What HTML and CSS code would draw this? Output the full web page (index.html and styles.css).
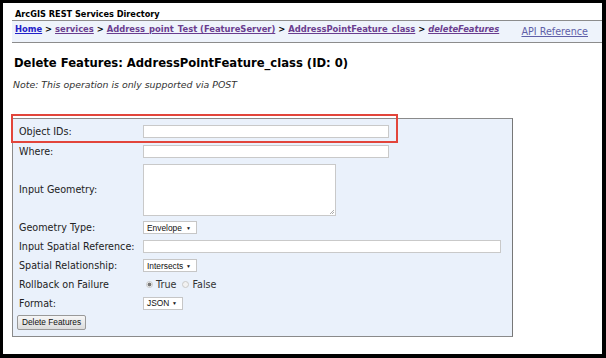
FILE: index.html
```html
<!DOCTYPE html>
<html>
<head>
<meta charset="utf-8">
<link rel="stylesheet" href="styles.css">
</head>
<body>
<div class="frame">
  <div class="userTable">ArcGIS REST Services Directory</div>
  <div class="navbar">
    <div class="crumbs">
      <a class="home" href="#">Home</a> &gt; <a href="#">services</a> &gt; <a href="#">Address_point_Test (FeatureServer)</a> &gt; <a href="#">AddressPointFeature_class</a> &gt; <a href="#"><i>deleteFeatures</i></a>
    </div>
    <a class="apiref" href="#">API Reference</a>
  </div>
  <h2 class="title">Delete Features: AddressPointFeature_class (ID: 0)</h2>
  <div class="note">Note: This operation is only supported via POST</div>
  <div class="formwrap">
    <div class="highlight"></div>
    <div class="formbox">
      <div class="row h20"><div class="lbl">Object IDs:</div><div class="fld"><span class="input w245"></span></div></div>
      <div class="row h20"><div class="lbl">Where:</div><div class="fld"><span class="input w245"></span></div></div>
      <div class="row tall"><div class="lbl">Input Geometry:</div><div class="fld"><span class="textarea"><svg class="grip" width="6" height="6" viewBox="0 0 6 6"><path d="M5 1L1 5M5 3L3 5" stroke="#999" stroke-width="0.8"/></svg></span></div></div>
      <div class="row h19"><div class="lbl">Geometry Type:</div><div class="fld"><span class="select w54">Envelope<b class="arr">&#9660;</b></span></div></div>
      <div class="row h19"><div class="lbl">Input Spatial Reference:</div><div class="fld"><span class="input w358"></span></div></div>
      <div class="row h19"><div class="lbl">Spatial Relationship:</div><div class="fld"><span class="select w54">Intersects<b class="arr">&#9660;</b></span></div></div>
      <div class="row h19"><div class="lbl">Rollback on Failure</div><div class="fld radios"><span class="radio on"></span><span class="rtxt">True</span><span class="radio"></span><span class="rtxt">False</span></div></div>
      <div class="row h18"><div class="lbl">Format:</div><div class="fld"><span class="select w40">JSON<b class="arr">&#9660;</b></span></div></div>
      <div class="row h20"><span class="button">Delete Features</span></div>
    </div>
  </div>
</div>
</body>
</html>
```
FILE: styles.css
```css
html, body { margin: 0; padding: 0; }
body { background: #000; width: 606px; height: 358px; overflow: hidden; }
.frame {
  margin: 3px 4px 0 3px;
  height: 351px;
  background: #fff;
  padding: 0 0 0 9px;
  box-sizing: border-box;
  font-family: "DejaVu Sans", Verdana, sans-serif;
  color: #000;
}
.userTable {
  font-size: 8.2px;
  font-weight: bold;
  padding: 4px 0 0 3px;
  line-height: 14px;
  box-sizing: border-box;
  height: 17px;
}
.navbar {
  display: flex;
  justify-content: space-between;
  background: #eef3fb;
  border-top: 1px solid #8c8c8c;
  border-bottom: 1px solid #8c8c8c;
  height: 23px;
  box-sizing: border-box;
  padding: 0 14px 0 3px;
}
.crumbs { font-weight: bold; font-size: 8.4px; line-height: 14px; padding-top: 1px; color: #000; }
.crumbs a { color: #6a3d8f; }
.crumbs a.home { color: #2320c8; }
.apiref { color: #5f5fa8; font-size: 9.6px; line-height: 15px; padding-top: 3px; }
.title {
  font-size: 11.6px;
  font-weight: bold;
  margin: 0;
  padding: 13px 0 0 2px;
  line-height: 15px;
}
.note {
  font-size: 9.4px;
  font-style: italic;
  color: #333;
  padding: 8px 0 0 1px;
  line-height: 12px;
}
.formwrap { position: relative; margin-top: 27px; width: 501px; }
.highlight {
  position: absolute;
  left: -1px; top: -4px;
  width: 387px; height: 29px;
  border: 2px solid #e2453b;
  box-sizing: border-box;
  pointer-events: none;
}
.formbox {
  background: #eaf1fb;
  border: 1px solid #8a8a8a;
  border-right-color: #777;
  height: 219px;
  box-sizing: border-box;
  padding: 2px 0 0 6px;
  font-size: 9.6px;
}
.row { display: flex; align-items: center; }
.h20 { height: 20px; }
.h19 { height: 19px; }
.h18 { height: 18px; }
.row.tall { height: 57px; }
.lbl { width: 124px; color: #222; }
.fld { display: flex; align-items: center; }
.input {
  display: block;
  height: 13px;
  background: #fff;
  border: 1px solid #c9c9c9;
  box-sizing: border-box;
}
.w245 { width: 246px; }
.w358 { width: 358px; }
.textarea {
  display: block;
  position: relative;
  width: 193px; height: 52px;
  background: #fff;
  border: 1px solid #c9c9c9;
  box-sizing: border-box;
}
.grip { position: absolute; right: 0; bottom: 0; }
.select {
  display: inline-flex;
  align-items: center;
  height: 13px;
  box-sizing: border-box;
  background: #fff;
  border: 1px solid #c6c6c6;
  font-family: "Liberation Sans", Arial, sans-serif;
  font-size: 8.4px;
  padding: 0 0 0 3px;
  color: #111;
}
.w54 { width: 54px; }
.w40 { width: 40px; }
.arr { font-size: 5px; margin-left: auto; margin-right: 5px; font-weight: normal; }
.radios { padding-left: 3px; font-size: 9.6px; }
.radio {
  width: 7px; height: 7px;
  border-radius: 50%;
  border: 1px solid #c9c9c9;
  background: #f2f2f2;
  box-sizing: border-box;
  margin-right: 3px;
}
.radio.on { background: radial-gradient(circle, #777 0 1.6px, #eee 2.2px); }
.rtxt { margin-right: 6px; color: #333; }
.button {
  display: inline-block;
  margin-left: -2px;
  height: 15px;
  line-height: 13px;
  box-sizing: border-box;
  padding: 0 4px;
  background: linear-gradient(#f6f6f6, #dcdcdc);
  border: 1px solid #999;
  border-radius: 2px;
  font-family: "Liberation Sans", Arial, sans-serif;
  font-size: 8.3px;
  color: #111;
}
```
